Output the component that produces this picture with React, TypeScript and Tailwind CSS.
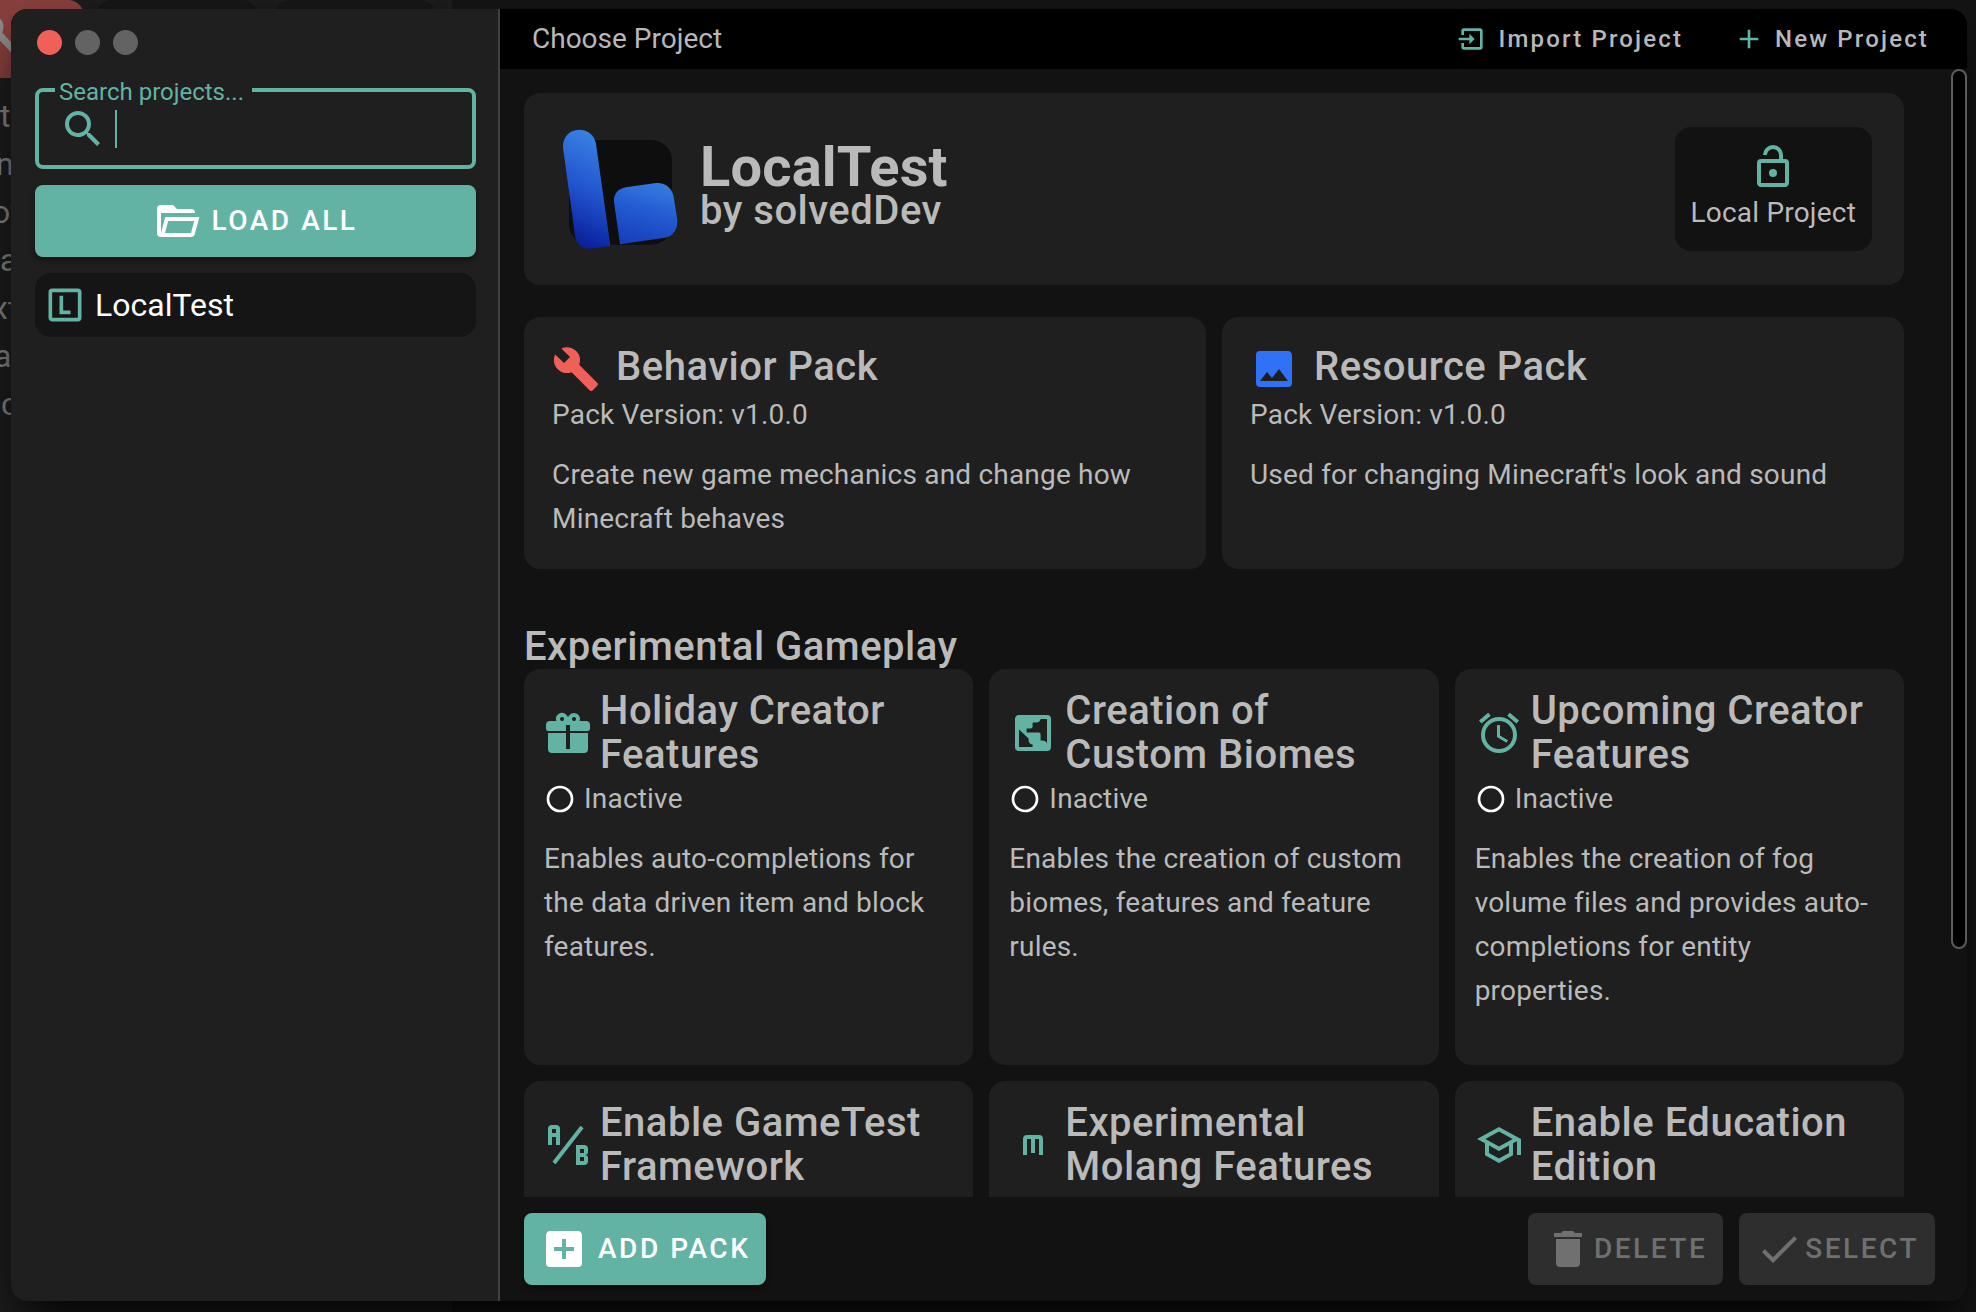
import React from 'react';

const icons = {
  wrench:
    'M22.7,19L13.6,9.9C14.5,7.6 14,4.9 12.1,3C10.1,1 7.1,0.6 4.7,1.7L9,6L6,9L1.6,4.7C0.4,7.1 0.9,10.1 2.9,12.1C4.8,14 7.5,14.5 9.8,13.6L18.9,22.7C19.3,23.1 19.9,23.1 20.3,22.7L22.6,20.4C23.1,20 23.1,19.3 22.7,19Z',
  image:
    'M8.5,13.5L11,16.5L14.5,12L19,18H5M21,19V5C21,3.89 20.1,3 19,3H5A2,2 0 0,0 3,5V19A2,2 0 0,0 5,21H19A2,2 0 0,0 21,19Z',
  gift: 'M9.06,1.93C7.17,1.92 5.33,3.74 6.17,6H3A2,2 0 0,0 1,8V10A1,1 0 0,0 2,11H11V8H13V11H22A1,1 0 0,0 23,10V8A2,2 0 0,0 21,6H17.83C19,2.73 14.6,0.42 12.57,3.24L12,4L11.43,3.22C10.8,2.33 9.93,1.94 9.06,1.93M9,4C9.89,4 10.34,5.08 9.71,5.71C9.08,6.34 8,5.89 8,5A1,1 0 0,1 9,4M15,4C15.89,4 16.34,5.08 15.71,5.71C15.08,6.34 14,5.89 14,5A1,1 0 0,1 15,4M2,12V20A2,2 0 0,0 4,22H20A2,2 0 0,0 22,20V12H13V20H11V12H2Z',
  earthBox:
    'M5,3C3.89,3 3,3.89 3,5V19A2,2 0 0,0 5,21H19A2,2 0 0,0 21,19V5A2,2 0 0,0 19,3H5M15.78,5H19V17.18C18.74,16.38 17.69,15.79 16.8,15.79H15.8V12.79A1,1 0 0,0 14.8,11.79H8.8V9.79H10.8A1,1 0 0,0 11.8,8.79V6.79H13.8C14.83,6.79 15.67,6 15.78,5M5,10.29L9.8,14.79V15.79C9.8,16.9 10.7,17.79 11.8,17.79V19H5V10.29Z',
  alarm:
    'M12,20A7,7 0 0,1 5,13A7,7 0 0,1 12,6A7,7 0 0,1 19,13A7,7 0 0,1 12,20M12,4A9,9 0 0,0 3,13A9,9 0 0,0 12,22A9,9 0 0,0 21,13A9,9 0 0,0 12,4M12.5,8H11V14L15.75,16.85L16.5,15.62L12.5,13.25V8M7.88,3.39L6.6,1.86L2,5.71L3.29,7.24L7.88,3.39M22,5.72L17.4,1.86L16.11,3.39L20.71,7.25L22,5.72Z',
  abTesting:
    'M4 2A2 2 0 0 0 2 4V12H4V8H6V12H8V4A2 2 0 0 0 6 2H4M4 4H6V6H4M22 15.5V14A2 2 0 0 0 20 12H16V22H20A2 2 0 0 0 22 20V18.5A1.54 1.54 0 0 0 20.5 17A1.54 1.54 0 0 0 22 15.5M20 20H18V18H20V20M20 16H18V14H20M5.79 21.61L4.21 20.39L18.21 2.39L19.79 3.61Z',
  alphaM: 'M9,7A2,2 0 0,0 7,9V17H9V9H11V16H13V9H15V17H17V9A2,2 0 0,0 15,7H9Z',
  school:
    'M12 3L1 9L5 11.18V17.18L12 21L19 17.18V11.18L21 10.09V17H23V9L12 3M18.82 9L12 12.72L5.18 9L12 5.28L18.82 9M17 16L12 18.72L7 16V12.27L12 15L17 12.27V16Z',
  lockOpen:
    'M18,20V10H6V20H18M18,8A2,2 0 0,1 20,10V20C20,21.1 19.1,22 18,22H6C4.89,22 4,21.1 4,20V10A2,2 0 0,1 6,8H15V6A3,3 0 0,0 12,3A3,3 0 0,0 9,6H7A5,5 0 0,1 12,1A5,5 0 0,1 17,6V8H18M12,17A2,2 0 0,1 10,15A2,2 0 0,1 12,13A2,2 0 0,1 14,15A2,2 0 0,1 12,17Z',
  folderOpen:
    'M6.1,10L4,18V8H21A2,2 0 0,0 19,6H12L10,4H4A2,2 0 0,0 2,6V18A2,2 0 0,0 4,20H19C19.9,20 20.7,19.4 20.9,18.5L23.2,10H6.1M19,18H6L7.6,12H20.6L19,18Z',
  magnify:
    'M9.5,3A6.5,6.5 0 0,1 16,9.5C16,11.11 15.41,12.59 14.44,13.73L14.71,14H15.5L20.5,19L19,20.5L14,15.5V14.71L13.73,14.44C12.59,15.41 11.11,16 9.5,16A6.5,6.5 0 0,1 3,9.5A6.5,6.5 0 0,1 9.5,3M9.5,5C7,5 5,7 5,9.5C5,12 7,14 9.5,14C12,14 14,12 14,9.5C14,7 12,5 9.5,5Z',
  alphaLBox:
    'M3,5A2,2 0 0,1 5,3H19A2,2 0 0,1 21,5V19A2,2 0 0,1 19,21H5C3.89,21 3,20.1 3,19V5M5,5V19H19V5H5M9,7H11V15H15V17H9V7Z',
  plus: 'M19,13H13V19H11V13H5V11H11V5H13V11H19V13Z',
  importBox:
    'M14,12L10,8V11H2V13H10V16M20,18V6C20,4.89 19.1,4 18,4H6A2,2 0 0,0 4,6V9H6V6H18V18H6V15H4V18A2,2 0 0,0 6,20H18A2,2 0 0,0 20,18Z',
  plusBox:
    'M17,13H13V17H11V13H7V11H11V7H13V11H17M19,3H5C3.89,3 3,3.89 3,5V19A2,2 0 0,0 5,21H19A2,2 0 0,0 21,19V5C21,3.89 20.1,3 19,3Z',
  trash: 'M19,4H15.5L14.5,3H9.5L8.5,4H5V6H19M6,19A2,2 0 0,0 8,21H16A2,2 0 0,0 18,19V7H6V19Z',
  check: 'M21,7L9,19L3.5,13.5L4.91,12.09L9,16.17L19.59,5.59L21,7Z',
  circle:
    'M12,20A8,8 0 0,1 4,12A8,8 0 0,1 12,4A8,8 0 0,1 20,12A8,8 0 0,1 12,20M12,2A10,10 0 0,0 2,12A10,10 0 0,0 12,22A10,10 0 0,0 22,12A10,10 0 0,0 12,2Z',
};

type IconName = keyof typeof icons;

function Icon({ name, className = 'size-12' }: { name: IconName; className?: string }) {
  return (
    <svg viewBox="0 0 24 24" fill="currentColor" aria-hidden="true" className={'shrink-0 ' + className}>
      <path d={icons[name]} />
    </svg>
  );
}

function ProjectLogo() {
  return (
    <svg viewBox="18 15 384 384" className="size-32 shrink-0" role="img" aria-label="Project logo">
      <defs>
        <linearGradient id="bar" x1="0.6" y1="0" x2="0.4" y2="1">
          <stop offset="0" stopColor="#3b83e4" />
          <stop offset="0.5" stopColor="#2255cf" />
          <stop offset="1" stopColor="#081c98" />
        </linearGradient>
        <linearGradient id="block" x1="0.65" y1="0" x2="0.35" y2="1">
          <stop offset="0" stopColor="#357be0" />
          <stop offset="0.5" stopColor="#2258d0" />
          <stop offset="1" stopColor="#1640bb" />
        </linearGradient>
      </defs>
      <rect x="57" y="60" width="309" height="314" rx="62" fill="#0e0e0e" />
      <path
        fill="url(#bar)"
        d="M181 377L120 386C96 388 79 372 75 347L39 82C37 52 58 30 87 29C114 29 134 46 138 72Z"
      />
      <path
        fill="url(#block)"
        d="M210 373L192 245C190 222 205 206 228 202L318 189C345 187 366 203 371 230L382 300C384 326 370 348 345 353Z"
      />
    </svg>
  );
}

const clippedLines = [
  { text: 't', shift: 'ml-0' },
  { text: 'n', shift: '-ml-1' },
  { text: 'ov', shift: '-ml-2' },
  { text: 'a', shift: 'ml-0' },
  { text: 'xt', shift: '-ml-2' },
  { text: 'a', shift: '-ml-1.5' },
  { text: 'c', shift: 'ml-px' },
];

/* The dimmed application that shows round the edges of the dialog. */
function Backdrop() {
  return (
    <div aria-hidden="true" className="absolute inset-0 flex overflow-hidden bg-[#141414]">
      <div className="w-[452px] shrink-0 bg-[#1c1c1c]">
        <div className="flex gap-4">
          <div className="-mr-1 h-[78px] w-[84px] rounded-tr-2xl bg-[#873f3c]">
            <svg viewBox="0 0 84 78" className="h-full w-full" fill="none" stroke="#8b8b8b" strokeWidth="5">
              <circle cx="-8" cy="27" r="9" />
              <path d="M-2 33L18 55" strokeWidth="7" />
            </svg>
          </div>
          <div className="h-12 w-[162px] rounded-t-2xl bg-[#161616]" />
          <div className="h-12 w-[162px] rounded-t-2xl bg-[#161616]" />
        </div>
        <div className="pt-[14px] text-[32px] leading-[48px] text-[#828282]">
          {clippedLines.map((line, i) => (
            <div key={i} className={line.shift}>
              {line.text}
            </div>
          ))}
        </div>
      </div>
    </div>
  );
}

function Sidebar() {
  return (
    <aside className="flex w-[489px] shrink-0 flex-col border-r-2 border-[#404040] bg-[#1f1f1f] pt-[21px] pr-[22px] pl-6">
      <div className="flex gap-[13px] pl-0.5">
        <button aria-label="Close" className="size-[25px] rounded-full bg-[#ee6059]" />
        <button aria-label="Minimize" className="size-[25px] rounded-full bg-[#636363]" />
        <button aria-label="Maximize" className="size-[25px] rounded-full bg-[#636363]" />
      </div>
      <fieldset className="mt-5 min-w-0 rounded-lg border-4 border-[#62b3a4] pb-3">
        <legend className="ml-4 pt-1 pr-2 pl-1 text-[24px] leading-[26px] text-[#62b3a4]">
          <label htmlFor="search">Search projects...</label>
        </legend>
        <div className="flex items-center pl-5 text-[#62b3a4]">
          <Icon name="magnify" />
          <span className="ml-2 h-[38px] w-0.5 bg-[#62b3a4]" />
          <input
            id="search"
            type="text"
            className="min-w-0 flex-1 bg-transparent text-[32px] text-white caret-transparent outline-none"
          />
        </div>
      </fieldset>
      <button className="mt-4 flex h-[72px] items-center justify-center gap-2.5 rounded-lg bg-[#62b3a4] text-[28px] font-medium tracking-[0.09em] text-white shadow-md shadow-black/40">
        <Icon name="folderOpen" />
        LOAD ALL
      </button>
      <button className="mt-4 flex h-16 items-center gap-2 rounded-2xl bg-[#151515] pl-2 text-[32px] text-white">
        <Icon name="alphaLBox" className="size-[44px] text-[#62b3a4]" />
        LocalTest
      </button>
    </aside>
  );
}

function TitleBar() {
  return (
    <header className="flex h-[60px] shrink-0 items-center bg-black pr-[38px] pl-8 text-[28px] text-[#b8b8b8]">
      <h1 className="flex-1">Choose Project</h1>
      <div className="flex gap-[50px] text-[24px] font-medium tracking-[0.09em]">
        <button className="flex items-center gap-2.5">
          <Icon name="importBox" className="size-8 text-[#62b3a4]" />
          Import Project
        </button>
        <button className="flex items-center gap-2.5">
          <Icon name="plus" className="size-8 text-[#62b3a4]" />
          New Project
        </button>
      </div>
    </header>
  );
}

const packs: { icon: IconName; color: string; title: string; version: string; text: string }[] = [
  {
    icon: 'wrench',
    color: 'text-[#ee6059]',
    title: 'Behavior Pack',
    version: 'v1.0.0',
    text: 'Create new game mechanics and change how Minecraft behaves',
  },
  {
    icon: 'image',
    color: 'text-[#2f72f6]',
    title: 'Resource Pack',
    version: 'v1.0.0',
    text: "Used for changing Minecraft's look and sound",
  },
];

const experiments: { icon: IconName; title: string; text?: string }[] = [
  {
    icon: 'gift',
    title: 'Holiday Creator Features',
    text: 'Enables auto-completions for the data driven item and block features.',
  },
  {
    icon: 'earthBox',
    title: 'Creation of Custom Biomes',
    text: 'Enables the creation of custom biomes, features and feature rules.',
  },
  {
    icon: 'alarm',
    title: 'Upcoming Creator Features',
    text: 'Enables the creation of fog volume files and provides auto-completions for entity properties.',
  },
  { icon: 'abTesting', title: 'Enable GameTest Framework' },
  { icon: 'alphaM', title: 'Experimental Molang Features' },
  { icon: 'school', title: 'Enable Education Edition' },
];

const heading = 'text-[40px] leading-[44px] font-medium tracking-[0.0125em]';

function ProjectDetails() {
  return (
    <div className="h-0 min-w-0 flex-1 pt-6 pr-[47px] pl-6">
      <section className="flex items-center gap-4 rounded-2xl bg-[#1f1f1f] p-8">
        <ProjectLogo />
        <div className="flex-1">
          <h2 className="text-[56px] leading-[44px] font-bold">LocalTest</h2>
          <p className={heading}>by solvedDev</p>
        </div>
        <div className="flex flex-col items-center rounded-2xl bg-[#121212] p-4">
          <Icon name="lockOpen" className="size-12 text-[#62b3a4]" />
          <span>Local Project</span>
        </div>
      </section>

      <div className="mt-8 grid grid-cols-2 gap-4">
        {packs.map((pack) => (
          <section key={pack.title} className="rounded-2xl bg-[#1f1f1f] p-7">
            <div className="flex h-12 gap-4">
              <Icon name={pack.icon} className={'size-12 ' + pack.color} />
              <h3 className={heading}>{pack.title}</h3>
            </div>
            <p>Pack Version: {pack.version}</p>
            <p className="mt-4">{pack.text}</p>
          </section>
        ))}
      </div>

      <h2 className={'mt-14 ' + heading}>Experimental Gameplay</h2>
      <div className="grid grid-cols-3 gap-4">
        {experiments.map((item) => (
          <section key={item.title} className="min-h-[396px] rounded-2xl bg-[#1f1f1f] p-5">
            <div className="flex items-center gap-2">
              <Icon name={item.icon} className="size-12 text-[#62b3a4]" />
              <h3 className={heading}>{item.title}</h3>
            </div>
            {item.text && (
              <>
                <div className="flex items-center gap-2">
                  <Icon name="circle" className="size-8 text-white" />
                  Inactive
                </div>
                <p className="mt-4">{item.text}</p>
              </>
            )}
          </section>
        ))}
      </div>
    </div>
  );
}

function Footer() {
  return (
    <footer className="flex shrink-0 items-center gap-4 bg-[#121212] pt-4 pr-8 pb-4 pl-6 text-[28px] font-medium tracking-[0.09em]">
      <button className="mr-auto flex h-[72px] items-center gap-2.5 rounded-lg bg-[#62b3a4] px-4 text-white shadow-md shadow-black/40">
        <Icon name="plusBox" />
        ADD PACK
      </button>
      <button disabled className="flex h-[72px] items-center gap-0.5 rounded-lg bg-[#2e2e2e] px-4 text-[#707070]">
        <Icon name="trash" />
        DELETE
      </button>
      <button disabled className="flex h-[72px] items-center gap-0.5 rounded-lg bg-[#2e2e2e] px-4 text-[#707070]">
        <Icon name="check" />
        SELECT
      </button>
    </footer>
  );
}

export default function App() {
  return (
    <div className="relative flex h-screen overflow-hidden pt-[9px] pr-[9px] pb-[11px] pl-[11px] font-['Roboto',sans-serif]">
      <Backdrop />
      <div className="relative flex min-w-0 flex-1 overflow-hidden rounded-2xl bg-[#121212] shadow-2xl shadow-black">
        <Sidebar />
        <div className="flex min-w-0 flex-1 flex-col">
          <TitleBar />
          <main className="flex min-h-0 flex-1 overflow-hidden text-[28px] leading-[44px] tracking-[0.007em] text-[#bababa]">
            <ProjectDetails />
            <div aria-hidden="true" className="w-4 shrink-0">
              <div className="h-[78%] rounded-full border-2 border-[#5c5c5c] bg-black" />
            </div>
          </main>
          <Footer />
        </div>
      </div>
    </div>
  );
}
